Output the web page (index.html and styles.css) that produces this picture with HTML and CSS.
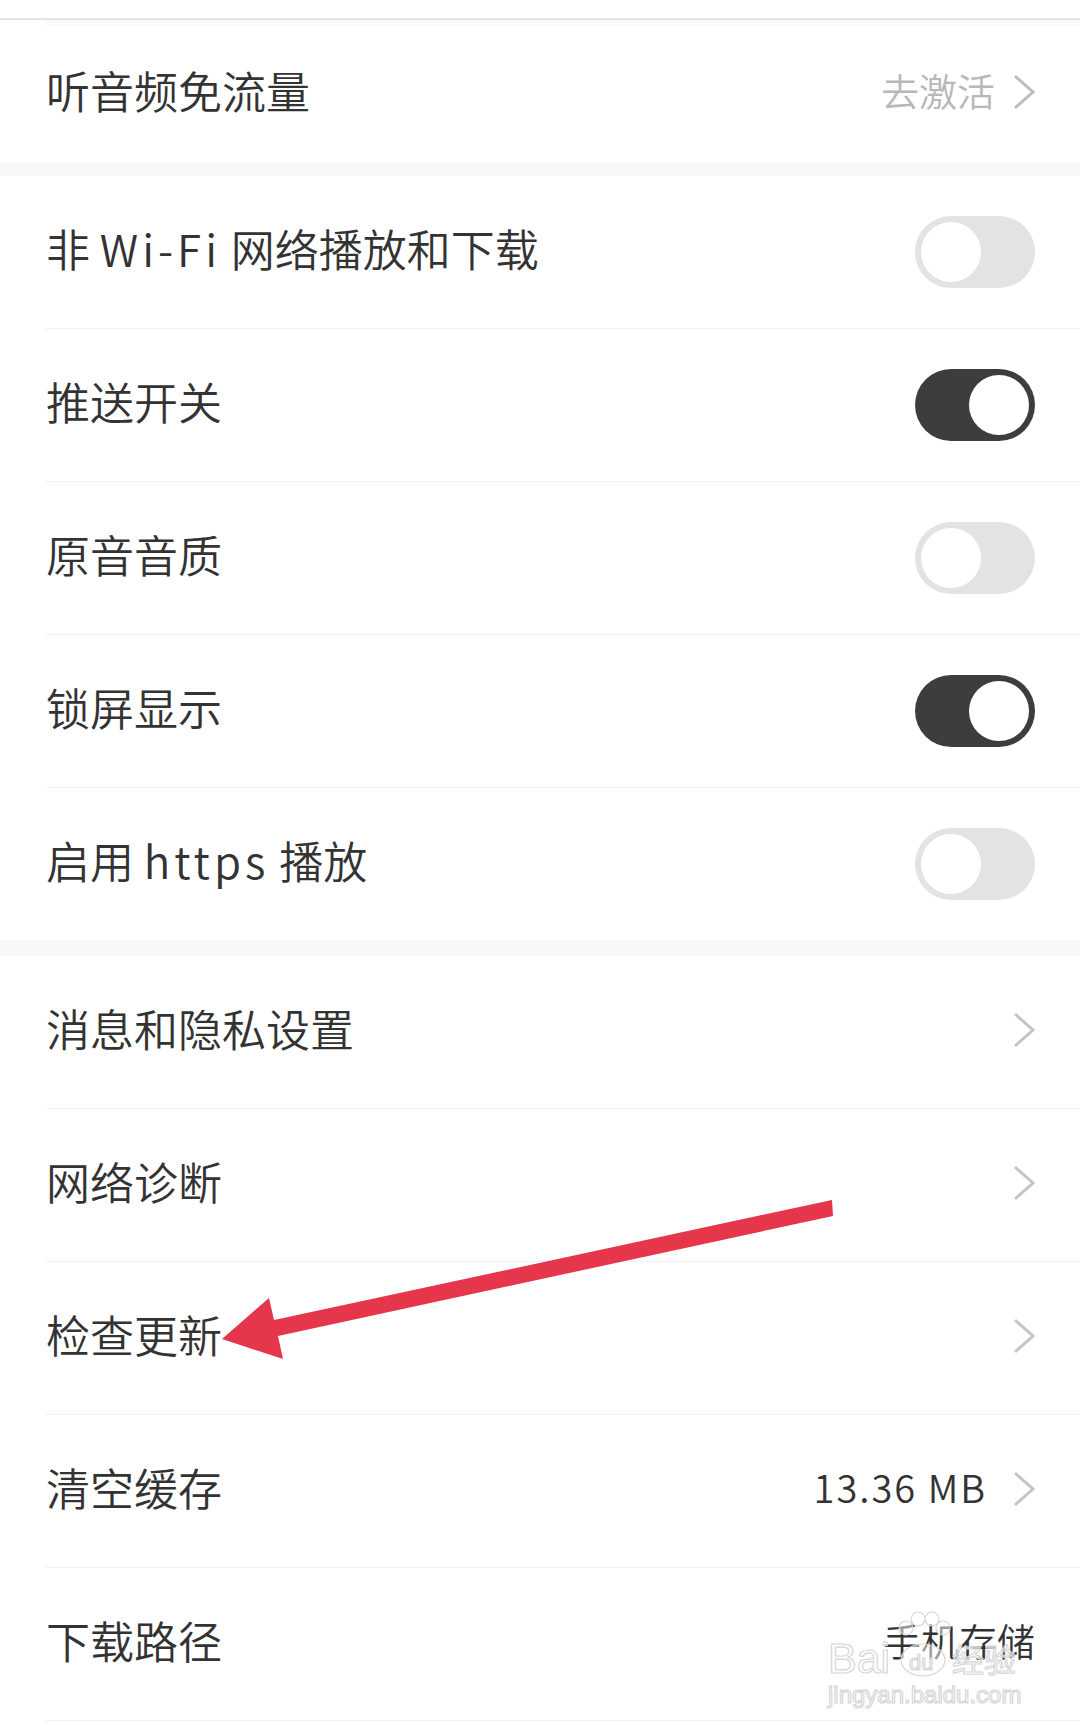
FILE: index.html
```html
<!DOCTYPE html>
<html lang="zh-CN">
<head>
  <meta charset="UTF-8">
  <meta name="viewport" content="width=device-width, initial-scale=1.0">
  <title>设置</title>
  <link rel="stylesheet" href="styles.css">
</head>
<body>
  <div class="page">
    <div class="top-edge"></div>
    <div class="top-band"></div>

    <section class="group">
      <div class="row row-tall">
        <span class="label">听音频免流量</span>
        <span class="extra">
          <span class="value value-muted">去激活</span>
          <svg class="chevron chevron-muted" viewBox="0 0 22 36"><polyline points="2,2 20,18 2,34"/></svg>
        </span>
      </div>
    </section>

    <div class="gap"></div>

    <section class="group">
      <div class="row">
        <span class="label">非 <span class="latin">Wi-Fi</span> 网络播放和下载</span>
        <span class="switch"><span class="knob"></span></span>
      </div>
      <div class="row">
        <span class="label">推送开关</span>
        <span class="switch on"><span class="knob"></span></span>
      </div>
      <div class="row">
        <span class="label">原音音质</span>
        <span class="switch"><span class="knob"></span></span>
      </div>
      <div class="row">
        <span class="label">锁屏显示</span>
        <span class="switch on"><span class="knob"></span></span>
      </div>
      <div class="row">
        <span class="label">启用 <span class="latin">https</span> 播放</span>
        <span class="switch"><span class="knob"></span></span>
      </div>
    </section>

    <div class="gap gap-wide"></div>

    <section class="group group-last">
      <div class="row">
        <span class="label">消息和隐私设置</span>
        <svg class="chevron" viewBox="0 0 22 36"><polyline points="2,2 20,18 2,34"/></svg>
      </div>
      <div class="row">
        <span class="label">网络诊断</span>
        <svg class="chevron" viewBox="0 0 22 36"><polyline points="2,2 20,18 2,34"/></svg>
      </div>
      <div class="row">
        <span class="label">检查更新</span>
        <svg class="chevron" viewBox="0 0 22 36"><polyline points="2,2 20,18 2,34"/></svg>
      </div>
      <div class="row">
        <span class="label">清空缓存</span>
        <span class="extra">
          <span class="value value-size">13.36 MB</span>
          <svg class="chevron" viewBox="0 0 22 36"><polyline points="2,2 20,18 2,34"/></svg>
        </span>
      </div>
      <div class="row">
        <span class="label">下载路径</span>
        <span class="value">手机存储</span>
      </div>
    </section>

    <!-- red arrow drawn over the screenshot -->
    <svg class="annotation" viewBox="0 0 1080 1733">
      <polygon points="832,1200 274,1320 269,1298 222,1339 283,1359 278,1336 833,1216"/>
    </svg>

    <svg class="watermark" viewBox="0 0 260 110">
      <text x="8" y="75" class="wm-big">Bai</text>
      <g class="wm-paw">
        <ellipse cx="103" cy="62" rx="22" ry="16"/>
        <circle cx="86" cy="30" r="7"/>
        <circle cx="98" cy="21" r="7"/>
        <circle cx="112" cy="21" r="7"/>
        <circle cx="123" cy="30" r="7"/>
      </g>
      <text x="89" y="72" class="wm-du">du</text>
      <text x="132" y="74" class="wm-cn">经验</text>
      <text x="8" y="105" class="wm-url">jingyan.baidu.com</text>
    </svg>
  </div>
</body>
</html>
```

FILE: styles.css
```css
body {
  margin: 0;
  background-color: #fff;
  font-family: "Noto Sans CJK SC", "Noto Sans", sans-serif;
  color: #333;
}
.page {
  position: relative;
  width: 1080px;
  height: 1733px;
  overflow: hidden;
}
.top-edge {
  height: 18px;
  border-bottom: 2px solid #e4e4e4;
}
.top-band {
  height: 6px;
  margin-left: 45px;
  background-color: #f9f9f9;
}
.group {
  padding-left: 45px;
}
.row {
  display: flex;
  align-items: center;
  justify-content: space-between;
  height: 152px;
  padding: 0 45px 0 1px;
}
.row + .row {
  border-top: 1px solid #f2f2f2;
}
.row-tall {
  height: 136px;
}
.group-last .row:last-child {
  border-bottom: 1px solid #f2f2f2;
}
.gap {
  height: 14px;
  background-color: #f8f8f8;
}
.gap-wide {
  height: 16px;
}
.label {
  font-size: 44px;
  font-weight: 350;
  line-height: 1;
  padding-bottom: 8px;
  color: #333;
}
.latin {
  letter-spacing: 4px;
}
.extra {
  display: flex;
  align-items: center;
}
.value {
  font-size: 38px;
  font-weight: 350;
  line-height: 1;
  padding-bottom: 8px;
  color: #333;
}
.value-muted {
  color: #b8b8b8;
  margin-right: 18px;
}
.value-size {
  letter-spacing: 2px;
  margin-right: 26px;
}
.chevron {
  width: 22px;
  height: 36px;
  margin-bottom: 4px;
  fill: none;
  stroke: #c4c4c4;
  stroke-width: 3;
}
.chevron-muted {
  stroke: #bdbdbd;
}
.switch {
  display: flex;
  box-sizing: border-box;
  width: 120px;
  height: 72px;
  padding: 6px;
  border-radius: 36px;
  background-color: #e3e3e3;
}
.switch.on {
  justify-content: flex-end;
  background-color: #3d3d3d;
}
.knob {
  width: 60px;
  height: 60px;
  border-radius: 50%;
  background-color: #fff;
}
.annotation {
  position: absolute;
  top: 0;
  left: 0;
  width: 1080px;
  height: 1733px;
  pointer-events: none;
}
.annotation polygon {
  fill: #e5364b;
}
.watermark {
  position: absolute;
  left: 820px;
  top: 1598px;
  width: 260px;
  height: 110px;
  overflow: visible;
  pointer-events: none;
}
.watermark text {
  fill: rgba(255, 255, 255, 0.6);
  stroke: #d6d6d6;
  stroke-width: 1.2;
}
.wm-big {
  font-family: "Liberation Sans", sans-serif;
  font-size: 43px;
}
.wm-du {
  font-family: "Liberation Sans", sans-serif;
  font-size: 22px;
}
.wm-cn {
  font-family: "Noto Sans CJK SC", sans-serif;
  font-size: 32px;
}
.wm-url {
  font-family: "Liberation Sans", sans-serif;
  font-size: 24px;
}
.wm-paw ellipse,
.wm-paw circle {
  fill: rgba(255, 255, 255, 0.5);
  stroke: #d6d6d6;
  stroke-width: 1.2;
}
```
